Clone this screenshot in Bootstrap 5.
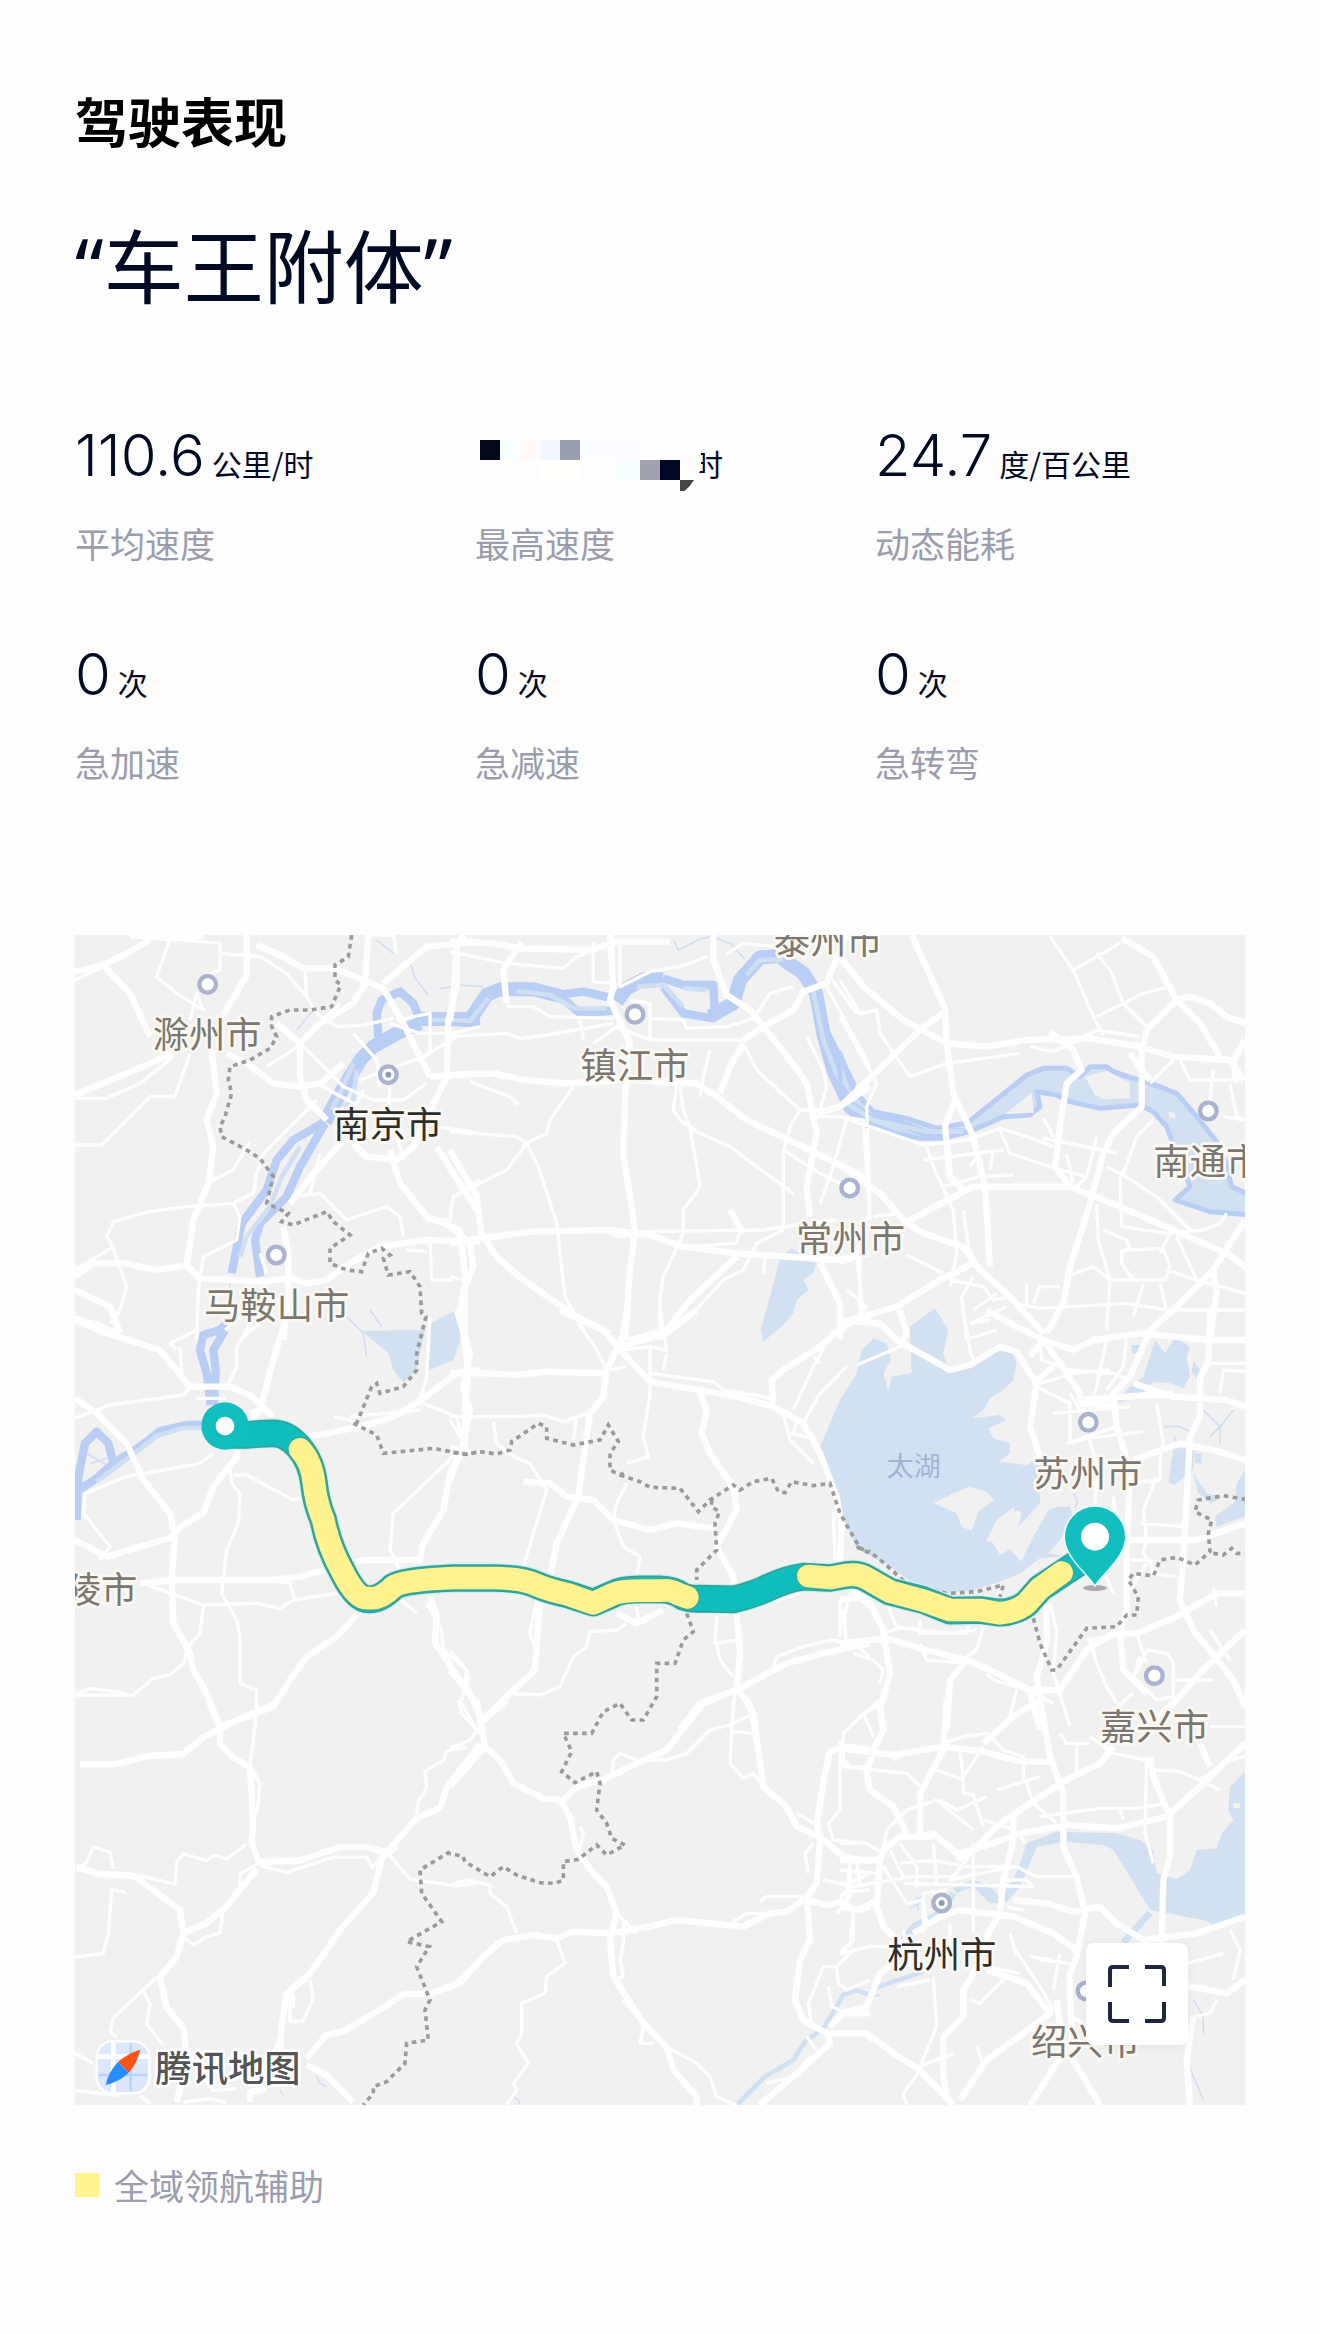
<!DOCTYPE html>
<html lang="zh-CN">
<head>
<meta charset="utf-8">
<meta name="viewport" content="width=device-width, initial-scale=1">
<title>驾驶表现</title>
<link href="https://cdn.jsdelivr.net/npm/bootstrap@5.3.0/dist/css/bootstrap.min.css" rel="stylesheet">
<script src="https://cdn.jsdelivr.net/npm/bootstrap@5.3.0/dist/js/bootstrap.bundle.min.js"></script>
<style>
body{background:#fdfdfe;color:#030a24;font-family:"Noto Sans CJK SC",sans-serif}
.page{padding:84px 75px 125px}
.page-title{font-size:53px;line-height:72px;color:#000}
.verdict{font-family:"Noto Sans","Noto Sans CJK SC",sans-serif;font-size:80px;line-height:100px;margin-top:60px}
.stats{--bs-gutter-x:30px;row-gap:71px;margin-top:103px}
.figure-line{height:72px;line-height:72px;column-gap:7px}
.num{font-family:Inter,"Noto Sans CJK SC",sans-serif;font-size:58px;font-weight:300}
.unit{font-size:30px}
.caption-line{font-size:35px;line-height:48px;color:#9b9dad;margin-top:28px}
.mosaic{width:226px;height:72px;margin-right:-15px;position:relative;z-index:1}
.route-map{margin-top:149px;aspect-ratio:1;background:#f1f1f1}
.route-map>svg{font-family:"Noto Sans CJK SC",sans-serif}
.expand{width:102px;height:102px;right:57px;bottom:60px;border-radius:8px;box-shadow:0 2px 12px #0000000d}
.legend-line{margin-top:56px;font-size:35px;line-height:48px;color:#9b9dad;gap:15px}
.swatch{width:24px;height:24px;background:#fef38f}
path,line,polyline{stroke-linejoin:round}
.water{fill:#d1e1f2}
.land{fill:#f1f1f1}
.bank{fill:none;stroke:#b9cef4;stroke-width:42}
.thin{stroke-width:25}
.stream{fill:none;stroke:#cfe0f3;stroke-width:14}
.creek{fill:none;stroke:#d1dff0;stroke-width:5}
.hw{fill:none;stroke:#fefefe;stroke-width:19}
.rd{fill:none;stroke:#fefefe;stroke-width:10}
.border-dots path{fill:none;stroke:#9b9b9b;stroke-width:11;stroke-dasharray:14 13;stroke-linejoin:miter}
.city{fill:#fff;stroke:#aab2d0;stroke-width:13}
.city-name{font-size:109px;fill:#7b7873;stroke:#faf8f0;stroke-width:16;paint-order:stroke;stroke-linejoin:round}
.major{fill:#2e2e2e}
.trip{fill:none;stroke-linecap:round}
</style>
</head>
<body>
<main class="page">
<h1 class="page-title fw-bold mb-0">驾驶表现</h1>
<p class="verdict mb-0">“车王附体”</p>
<section class="row stats">
<div class="col-4"><div class="figure-line d-flex align-items-baseline"><span class="num">110.6</span><span class="unit">公里/时</span></div><div class="caption-line">平均速度</div></div>
<div class="col-4"><div class="figure-line d-flex"><svg class="mosaic flex-shrink-0" viewBox="0 0 226 72" aria-hidden="true"><path fill="#fdfdfe" d="M0 0H226V48Q224 58 218 62H0z"/><path fill="#05081b" d="M5 21h20v20H5z"/><path fill="#f7ffff" d="M25 21h20v20H25z"/><path fill="#fffaf7" d="M45 21h20v20H45z"/><path fill="#f2f7ff" d="M65 21h20v20H65z"/><path fill="#989db0" d="M85 21h20v20H85z"/><path fill="#fbfcff" d="M105 21h60v20h-60z"/><path fill="#fffffb" d="M65 41h40v20H65z"/><path fill="#f5ffff" d="M145 41h20v20h-20z"/><path fill="#a0a2b0" d="M165 41h20v20h-20z"/><path fill="#010824" d="M185 41h20v20h-20z"/><path fill="#444448" d="M205 61h14q-6 10-14 14z"/></svg><span class="unit mt-2">时</span></div><div class="caption-line">最高速度</div></div>
<div class="col-4"><div class="figure-line d-flex align-items-baseline"><span class="num">24.7</span><span class="unit">度/百公里</span></div><div class="caption-line">动态能耗</div></div>
<div class="col-4"><div class="figure-line d-flex align-items-baseline"><span class="num">0</span><span class="unit">次</span></div><div class="caption-line">急加速</div></div>
<div class="col-4"><div class="figure-line d-flex align-items-baseline"><span class="num">0</span><span class="unit">次</span></div><div class="caption-line">急减速</div></div>
<div class="col-4"><div class="figure-line d-flex align-items-baseline"><span class="num">0</span><span class="unit">次</span></div><div class="caption-line">急转弯</div></div>
</section>
<section class="route-map position-relative overflow-hidden">
<svg class="d-block w-100 h-100" viewBox="45 45 3510 3510" role="img" aria-label="行程路线地图">
<!-- rivers and lakes -->
<g>
<path class="bank" d="M1260 297H1080M1080 310L1010 340 940 380 905 415 870 470 830 540 795 605"/>
<path class="bank thin" d="M1080 300L1060 250 1020 215 965 240 950 280 955 350M795 605L700 660 650 720 620 810 545 910 515 1060M795 610L720 740 680 830 600 910 585 960 600 1070"/>
<path class="stream" d="M880 430L840 520 815 570M720 680L665 770 630 860 560 950 540 1010M890 450L880 540 850 560M1110 300H1240"/>
<path class="creek" d="M1050 125l15 50 40 50M760 270l-50 60M950 60l50 40M1140 205l50-5M510 1090l-5 60"/>
</g>
<g transform="translate(0 1170)">
<path class="bank thin" d="M520 20L480 60 430 75 420 120 440 190 452 285M495 60L460 120 467 180 462 285M430 345H380L300 363 240 410 160 460 145 400 110 365 75 400 55 500 50 630M160 460L110 505 50 545"/>
<path class="stream" d="M430 354H370L290 378 230 425 110 515"/>
<path class="creek" d="M80 430l60 35M90 460l50-15M860 20l50 50 10 70M930 0l35 50"/>
<path class="water" d="M905 62L1095 60 1070 180 1030 217 1000 180 985 130zM1112 40L1190 0 1205 80 1180 150 1105 182z"/>
</g>
<g transform="translate(1170)">
<path class="bank" d="M0 298L60 300 110 225 150 208 250 208 330 228M500 245L530 205 580 178 640 178M780 290L850 250 870 180 930 112 985 108 1060 160 1098 220 1120 340 1150 450 1200 560 1265 612"/>
<path class="bank thin" d="M320 225L400 215 490 235M330 228L390 280 490 272M640 175L700 195 790 195 795 290M640 200L700 280 790 295M1125 330L1205 490 1190 560"/>
<path class="stream" d="M0 300L60 303 115 235M560 200L640 195 700 260M200 213L300 225 370 265 470 265M890 165L930 120 1000 118M1090 215L1120 360 1155 450 1215 580M700 205L770 210"/>
<path class="creek" d="M670 60l15 30 60-30 40-12 60 25 40 45M20 195l80 5"/>
<path class="water" d="M990 1015L1025 985 1098 1030 1090 1060 1060 1080 1075 1110 1040 1140 1030 1180 1000 1215 970 1240 940 1265 932 1230 960 1130z"/>
</g>
<g transform="translate(2340)">
<path class="water" stroke="#b9cef4" stroke-width="15" d="M0 400L40 510 100 575 200 595 290 625 380 610 480 530 560 465 610 445 680 445 720 470 750 440 800 440 820 455 880 475 920 485 1010 520 1070 590 1130 665 1155 720 1175 800 1230 825V885L1110 875 1005 840 1050 800 1010 700 980 620 940 575 900 555 780 565 690 545 650 525 590 515 600 560 570 585 490 590 400 630 310 655 240 655 170 640 70 605 0 520z"/>
<path class="bank" style="stroke-width:24" d="M0 500L40 560 90 592 180 610 260 642 370 636"/>
<path class="stream" d="M20 550L100 600 260 635 370 635"/>
<path class="land" d="M735 470L800 452 870 488 870 535 790 538 765 525zM495 582L575 518 582 578zM985 575l20 5 0 16-15-4z"/>
</g>
<g transform="translate(2340 1170)">
<path class="water" d="M-60 410L0 270 50 190 65 120 100 85 140 100 153 150 130 190 145 245 155 200 215 188 210 50 250 20 285-5 325 60 310 130 325 180 400 160 470 120 515 130 530 160 520 210 490 240 450 265 430 300 395 325 480 315 500 330 445 355 460 385 510 400 510 430 475 455 560 465 600 440 620 590 690 590 700 620 660 690 625 730 670 738 600 745 540 790 480 815 400 840 320 850 220 820 150 770 50 715-10 580z"/>
<path class="land" d="M282 580L340 550 390 530 440 545 462 570 415 605 395 662 365 650 350 610zM438 692L470 630 520 592 545 610 535 650 600 580 600 440 690 540 680 580 625 600 580 680 543 755 510 718 480 735 460 700z"/>
<path class="water" d="M560 465l35 10-20 90-50 40-10-50zM945 90l30 40 30-50 45 30-10 30 10 60-20 35-40-15-50-5-40 40-80 30 60-65 30-20zM875 105h28v25h-28zM1060 150l20 30-10 25-15-20zM1000 415h65l-5 65-55 45-20-5zM1065 430h20v30h-20zM1060 490l40 60 45 10-30 20-40-30zM1190 520l25-40v140l-85 30-5-30 60-45z"/>
<path class="creek" d="M970 350h50l40 20M1090 300l50 50 40-50M1110 380l30-30 0 50M1000 380l20 30M700 545l12 30-6 20"/>
</g>
<g transform="translate(2340 2340)">
<path class="water" d="M560 430L650 395 830 400 900 420 940 450 950 520 1010 537 1050 510 1070 450 1130 445 1145 400 1180 360 1165 330 1170 260 1225 205V650L1140 685 1090 660 930 630 870 530 820 450 790 435 680 425 590 440 570 490 540 560 500 605 450 610 400 560 350 580 340 565 400 538 450 560 480 590 520 540 540 490z"/>
<path class="stream" style="stroke-width:20" d="M340 580L300 640 220 680 190 720M850 728L930 638"/>
<path class="creek" d="M205 610l40-20M210 625l35-20M230 590l5 40M0 890l40-20 50 20 30-5M1040 1070l20 60 30 70M1060 900l30 50 0 50"/>
<path class="stream" d="M90 870L160 845 250 815"/>
<path class="land" d="M1180 310h20v14h-20z"/>
</g>
<g transform="translate(1170 2340)"><path class="stream" d="M1260 885L1220 870 1180 885 1120 985 1065 1025 1030 1080 945 1130 860 1215"/><path class="creek" d="M190 1190l20 15-10 15M-510 1170l10 15M-470 1160l20-5M-400 1130l10 20 20 10"/></g>
<!-- roads -->
<g>
<path class="hw" d="M45 155L130 135 200 100 270 60M130 135L210 220 270 350M45 525L200 460 340 400M210 45L330 55 430 45M560 45V165L490 285M590 75L660 105 730 145 820 145 910 180 970 205 1030 310 1110 470M500 400L560 430 640 490 720 500 780 490 850 430M455 390L470 520 440 600 460 680 445 790 400 900 380 1035 290 1050 190 1030 100 1030 45 1070M650 310L720 370 720 470 740 540 800 600M880 670L920 710 1010 720 1060 680 1160 470 1165 300 1190 200 1190 70 1215 45M925 45L915 190 880 250 780 310 720 370M380 1035L420 1075 600 1085 690 1075 740 1090 800 1080 870 1030 960 980 1100 960 1260 965M990 690L1020 790 1100 890 1200 930 1215 1070 1215 1260M1130 680L1180 760 1250 870M1110 470L1260 460M970 190L1100 80 1260 65M670 920L685 1000 685 1130 670 1260M45 1110L150 1160 180 1240M690 850L760 760 860 650"/>
<path class="rd" d="M330 55L290 170 350 220 430 270 410 220 390 300M320 55L480 70 480 100 600 110 680 160 740 230 770 280 830 320 910 315 1000 295M45 180L130 140M45 535H140L240 490 340 410M345 530L390 400M345 530H270L190 610 125 675H45M840 250L700 390 620 440M720 370L850 500 940 540 1030 540 1100 490M770 490L900 560M880 340L950 420 960 500M1010 300L1110 280 1110 400M990 310L1080 340 1180 340 1260 320M930 45L1000 45 1010 100M900 480L1090 410 1190 350M570 665L520 750 440 790M770 540L690 620 610 700 590 760 580 820 520 850 380 860 270 875 160 905 140 950 160 980 45 1050M150 960L200 1100 180 1170 150 1210M520 850L540 890 530 960 430 1010 415 1110 410 1260M700 830L780 820 860 900 980 860 1020 890 1030 950M780 700L750 820M850 640L910 510M1130 620L1260 640M1110 960L1115 1080 1180 1080M1040 990L1100 995M1030 720L1010 640M1100 900L1170 900 1180 830 1260 780M735 145L740 230M480 70L480 150 430 170M600 1000L620 1060M540 1260L620 1190M45 1190L110 1210 180 1240M990 500L985 560"/>
</g>
<g transform="translate(0 1170)">
<path class="hw" d="M45 30L140 70 300 120 390 230 510 230 570 255 640 320M685 0L640 150 600 300 540 370 530 440 460 530 430 610 360 650 340 680 140 740 45 690M45 265L110 310 200 400 250 510 330 610 345 680 335 810 340 940 390 1030 400 1080 440 1150 480 1250M570 310L600 300M740 380L800 370 900 350 1000 320 1070 280 1190 190 1260 180M1200 0L1225 180 1215 280 1215 410 1170 490 1150 600 1090 700 1080 750 910 750 720 800 640 810H340L240 820M890 915L830 980 740 1040 690 1110 640 1190 480 1250M1110 860L1130 920 1125 1000 1160 1050 1260 1200"/>
<path class="rd" d="M45 325L150 285 370 255 390 235M350 120L330 100 410 60M360 110L365 190M590 10L530 110 530 170 500 230M410 265H500M460 430L420 460 310 480 200 500 75 550 70 610 150 710 120 750M510 470L515 520 540 550 535 640 500 720 485 850 530 930 540 980 540 1120 590 1140 585 1260M520 495H560L700 570 740 560M250 820L430 885 590 880 660 895 700 870 830 850M430 885L420 970 385 1010 370 1060 330 1095 280 1105 220 1155H45L90 1135 200 1150M620 810L690 820 705 870M1110 20L1100 200 1080 270M820 320L870 330 910 350M1190 430L1000 610 990 720 1030 800 1000 850 1070 910M870 320L1080 300M1090 280L1190 320 1210 400M1230 320L1260 320M1100 880L1145 960 1150 1020 1220 1080 1225 1110 1200 1180M1260 430L1170 410M495 60L540 20"/>
</g>
<g transform="translate(1170)">
<path class="hw" d="M0 65L130 70 215 85 420 90 500 65 660 65M215 65L160 150 170 250M20 65L10 240 0 300M480 45L490 200 480 240 540 370 530 400 520 700 555 930 540 1050 525 1260M790 45V120L830 225 900 270 940 320 1020 420 1070 490 1100 640 1070 800 1080 890M530 480L350 490 220 480 130 460 0 465M530 480L740 490 800 530 890 600 1100 700 1260 780M880 370L840 440 810 520M880 360L940 320 1030 270 1060 215 1130 190 1145 150 1190 45M0 690L80 830 95 940 140 1010 220 1080 380 1190 480 1240M0 970L60 960 240 935 480 930 600 945 700 980 860 1000 1160 1020 1260 1000M1110 1030L1170 1150 1170 1260M1100 580L1170 560 1260 500M860 1010L720 1140 650 1230 540 1260M0 920L60 970 70 1040 40 1110 30 1190 45 1260M840 870L880 940"/>
<path class="rd" d="M0 95L170 130 340 145 380 110 440 90M430 65V185L490 190M510 75L510 200 600 155 690 140 770 110M830 100L880 70 980 80M170 260L250 260 300 290 490 295M600 295L700 300 710 325 830 320 930 290M0 350L170 340 210 355 290 345 490 310M390 300L400 360M430 370L500 320 600 360 600 250 540 240M600 360H880M880 370L920 450 1050 570 1110 570M1050 570L1020 620 1000 700 1000 930M920 280L960 220 1030 200M1070 350L1120 450 1130 500 1110 570M780 390L760 470 750 530M690 500L700 570 720 620 740 740 750 800 700 870 700 940 640 1070 630 1130V1260M680 490L670 570 690 600 750 640 840 680 920 740 1030 820M370 500L300 600 290 640 230 670 170 750 10 830 0 880M230 670L265 740 320 910 345 1130 400 1230M0 635L200 650 230 670M60 485L180 530 205 555M1000 690L1110 760 1170 790M1190 600L1140 770 1110 850M560 935L940 930 1040 915 1160 900M470 935L500 950 560 945M1000 930L920 970 880 1050 820 1080 720 1190M700 980L860 970 870 930M945 1010L940 1060M1240 930L1220 1010 1240 1180M1100 590L1160 590 1240 600 1260 900M0 1070L40 1080M1140 170L1220 280M1130 200L1260 440M1190 1110L1250 1160 1170 1240"/>
</g>
<g transform="translate(2340)">
<path class="hw" d="M215 45L315 265 320 370 340 520 400 650 435 800 450 1040M0 110L70 200 190 300 320 370 440 380 560 360 750 355 900 380 1000 410 1170 420 1210 480M845 55L940 110 1010 240 1080 310 1140 410M920 330L1010 240 1050 230 1110 250 1160 290 1230 315M315 275L240 330 0 560M630 335L700 390 725 450 680 490 660 620 645 740 690 800M920 330L905 400 905 560 820 640 790 700 750 850 690 1040 670 1150 620 1240M345 540L315 620 330 770 370 810M0 735L120 820 200 910M190 910L400 800 690 800 840 860 1160 1000 1230 1050M200 910L250 940 370 980 420 1050 510 1130 610 1240M400 1030L300 1080 170 1160 0 1210M1215 900L1120 1050 1000 1170 920 1240M1120 1050L1130 1120 1110 1250M1215 360L1180 420 1190 490M870 400L905 450 930 480"/>
<path class="rd" d="M630 50L700 150 760 290 790 345M700 150L840 70M770 100L810 150 850 250 920 320M770 290L910 220 990 200M0 180L60 280 110 270 120 340 210 470 320 430 540 400M570 380L640 395 700 370 770 330 900 350M0 290L110 490 80 560 90 880 70 920M0 590L150 640 250 675 380 660 480 625 560 650 640 680M260 680L280 740 340 870 350 1000 330 1100M250 720L490 690M310 800L420 770 520 765M460 690L450 750M480 630L510 700 660 750 740 770 770 650M640 660L830 700M610 655L790 690M850 760L890 650 940 600M800 740L840 760 950 830 1050 930M840 770L845 920M1000 420L930 490M1020 420L1050 480 1190 480M1120 450L1110 540M1170 490L1190 590 1215 600M1150 590L1215 600M770 850L775 960 810 1080 800 1230M790 930L860 960 870 990 970 985 990 1040 975 1080 880 1080 845 1030V995L870 985M845 920L980 940 1090 930 1140 910 1160 880M990 940L960 1000M1010 950L1070 1080 1215 1120M980 1050L1070 1080M680 1070L760 1040 810 1080 880 1080M520 1150L600 1165 860 1150 980 1170 1215 1170M960 1090L980 1170M910 1090L880 1190M370 870L385 980 420 1060M200 1005L310 1060M400 1070L365 1130 380 1260M330 1080L430 1100 460 1140 510 1130M400 1170L470 1120M390 1210L500 1160M560 1090V1160M580 1150L600 1100H660M610 595L640 650M680 700L700 790M740 770L700 810M390 740L420 700M60 950L60 1170M0 1030L60 1010M100 890L180 880"/>
</g>
<g transform="translate(1170 1170)">
<path class="hw" d="M330 0L460 60 510 120 600 215 860 260 970 290 1060 340 1110 430 1160 560 1175 650 1170 760M530 0L515 90 470 180 460 260 420 310 400 450 385 560 320 700 300 800M0 190H110L200 195 290 185 460 190M220 515L300 520 350 560 430 570 490 630 600 660 680 640 790 655M750 250L770 300 755 370 780 430 850 530 860 600 800 710 850 800 870 1030 860 1130 900 1190 915 1260M510 110L650 70 740 0M970 280L965 210 1000 180 1110 110 1190 40 1260 20M270 860L255 1080 180 1150 100 1230M860 1140L1010 1060 1120 1030 1260 1000M860 1140L750 1180 690 1260M500 910L560 940 640 900M0 1080L60 1150 100 1240M20 0L60 130 40 230 60 300 40 400 0 510M1210 840L1260 890"/>
<path class="rd" d="M0 320H200L280 315 340 335 440 300M130 335L140 400 190 440 240 460 290 540 220 770M385 40L440 120 470 180M520 120L600 110 650 120 630 0M600 110V250L580 380 595 440 530 460M650 130L640 180M480 180L530 170M600 190L790 215 820 240 970 265M1150 60L1090 170 1030 300M1190 170L1110 250 1060 340M1090 140L1110 160M1000 310L1020 390 1090 460M1020 370L1090 385M1040 330L1030 370M530 520L500 580 490 630 520 710 570 740 560 800M370 390L380 320M260 870L240 970 260 1030M530 940L500 960 420 965 410 1010 370 1040 330 1130 270 1155 180 1150M800 920L795 1000 860 990M800 1000L810 1050 850 1100M870 900L1050 850M970 1070L980 1040 1060 1010 1140 990 1210 1000 1260 1040M1200 850L1180 930 1190 1000M1150 600L1155 750M0 1020L50 1080 40 1150 30 1190M855 1150L845 1260M560 890L565 930M0 330L30 380"/>
</g>
<g transform="translate(2340 1170)">
<path class="hw" d="M0 30L120 40 170 90 330 180 390 165 480 110 530 125 570 190 590 220 570 350 600 440M180 0L200 70 180 110M440 0L530 50 610 90 660 160 720 250 720 290M0 870L80 860 130 960 150 1090 120 1200 130 1260M0 1000L140 985 240 1015 380 1050 450 1080 570 1140 660 1140 740 1020 820 970 890 970 1010 920 1130 850 1215 850M570 140L610 90 700 120 760 90 900 70 1110 90H1215M930 60L870 200 820 250 830 350 870 480 860 740 860 900 840 970 850 1080 920 1150M1110 0L1105 160 1080 200V320L1050 380 1040 560 1030 750 1020 870 1060 960 1180 1110 1215 1190M640 170L580 220M880 220L1000 260 1160 270 1215 290M720 270L1000 250M830 290L720 280M870 690H1070L1215 640M880 450L1020 400 1120 420 1215 450M620 880L620 1000 590 1100 600 1160M1215 960L1090 1080 1000 1180 930 1240M380 1050L330 1110 320 1260M570 1150L600 1260"/>
<path class="rd" d="M370 0L390 120 400 150M390 40L450 30M390 85L470 60M50 165L180 110M600 90L605 150 690 180 820 190 870 210M800 90L765 250M860 80L850 170 800 240M600 220L700 190 810 180M590 230L690 280 690 400 740 385 910 365M640 310L870 290M745 380L770 460 765 580M680 400L830 350M690 250L720 300M1090 160H1215M1215 185L1150 180 1140 250M900 640L1030 650M930 520L960 510 960 450 970 400 950 280M950 500L910 600 920 690 910 730 930 760M870 520L940 510M870 750H930L940 790 1010 800M820 560L830 640M790 780L820 850M870 840L920 760M630 880L650 960 640 1090 690 1250M600 860L640 900M750 990L770 1060 800 1130 830 1180M740 990L850 970M890 970L920 1060M890 1090L920 1020 980 1030 1000 1060V1160L950 1170 880 1100 900 1040M1000 1110H1120M1110 960L1170 1050M1120 830L1130 890M140 880L170 950 240 960 330 970 410 960M430 950L410 1020 380 1040M240 930L240 970 380 970 390 920M240 1000L260 1050 390 1060M10 900L20 1000M130 970L190 950M440 1090L460 1110 560 1140 640 1180M530 1140L510 1220M40 1030L100 1050 130 1080 120 1120M120 1170L40 1240M880 1150L820 1200M0 870V980"/>
</g>
<g transform="translate(0 2340) scale(1 1.014)">
<path class="hw" d="M445 0L480 85 480 130 520 170 570 200 580 370 575 420 600 490M640 15L550 50 430 110 370 160 270 165 165 190 60 190M50 495L120 515 220 520 360 620 370 690 350 760 300 820 320 910 370 970 380 1060 350 1190M590 500L500 610 440 660 370 690M600 480L720 475 840 435 920 435 980 450 1070 350 1140 320 1160 260 1260 130M970 450L940 570 840 680 750 810 680 870 665 960 660 1050M1260 770L1190 840 1110 870 1030 870 970 910 850 980 800 990 740 1060M740 1080L800 1110 880 1190M570 1190V1160L620 1150"/>
<path class="rd" d="M590 0L580 120 570 190 600 250 590 340M50 500L80 480 100 435 150 450 160 500M240 520L345 545 350 480 370 455 440 475 460 460 500 470 560 425M200 570L155 560 145 690 130 750 45 760M540 560V515L600 480M370 700L400 725 440 700 480 690 490 620M290 820L160 940 150 980 170 1000M250 860L270 900 260 960 310 1020M600 490L680 510 820 465 920 465 940 500M980 450L1050 530 1190 550 1260 540M940 490L1010 440 1000 420M1070 350L1075 300 1100 260 1095 210 1150 180 1160 150 1220 140M690 870L690 950H730L760 880 750 830M700 870L700 910M640 1050L670 960M45 1155L180 1170M240 1170L270 1195M370 1190L450 1180 500 1190M45 1045L100 1075M1200 0L1250 90M390 1050L460 1155 530 1150"/>
</g>
<g transform="translate(1170 2340)">
<path class="hw" d="M80 0L105 140 0 260M170 0L100 60M105 140L150 180 190 250 280 295 330 300 360 350 380 450 430 520 470 560 500 640 480 720 490 830 580 970 650 1040 670 1110 740 1190V1215M340 300L380 260 460 240 560 190 650 150 760 10 790 0M0 860L30 850 100 770 160 720 250 705 320 715 370 695 480 700 600 680 680 660 880 680 960 640 1010 635 1060 600M890 0L910 40 930 190 940 260 1010 320 1040 380 1110 410 1180 470 1260 485M1260 150L1190 140 1140 155 1125 220 1100 370 1110 420 1100 550 1070 590 1080 720 1050 780 1035 900 1060 960 1130 1000H1250L1270 1020M1070 600L1130 615 1180 605 1210 630 1260 620M1130 1000L1140 1030 1040 1120 930 1215M1140 980L1180 940 1260 940"/>
<path class="rd" d="M25 0L35 40 90 100M0 145L60 120 90 80M485 230L490 180 510 160 560 180 650 180 710 160 780 90 840 75 900 45M850 0L840 190 880 235 910 220 940 260M850 95L910 100M0 555L50 540 120 555 120 580 170 620 200 700M320 720L345 790 290 830 285 880 215 910 215 1000 200 1030 235 1090 190 1150 200 1170 170 1215M390 380L400 400 385 460M500 640L520 660 520 730 510 780 520 830 490 840M520 660L560 700M520 900L570 960M580 980L570 1030 610 1030M650 1040L740 1090 780 1130 800 1190 860 1215M130 730L220 710 270 700M850 665L890 640H950M930 605L950 590 1060 590M1240 40L1180 100V180L1200 200 1250 200M1170 160L1170 330 1135 370 1150 420 1240 430M1040 340L1110 380M1090 430L1065 460 1075 520M1200 480V590L1160 640M1120 540L1190 555 1260 520M1190 575L1260 570M1210 630L1200 740M1260 740L1210 750 1160 800 1120 800 1075 910 1085 980M1160 800L1165 850 1190 870 1260 840M1135 860L1145 920 1170 930M1070 1010L1100 1050M950 1150L1030 1130 1080 1070"/>
</g>
<g transform="translate(2340 2340)">
<path class="hw" d="M115 0L130 90 100 150 80 220 90 270 160 320 200 400M320 0L310 150 240 280 240 410 280 400 350 460 400 450M0 145L160 165 310 140 430 155 540 185 630 185M430 130L520 50 600 0 630 170 670 280 670 440 710 530 735 640 710 770 690 820 690 890 700 1080 780 1215M400 450L480 370 600 290 680 240 780 190 820 140M930 170L940 230 990 350 990 470 970 540 965 730M1215 130L1080 260 980 350 830 385 680 375 540 400 400 450 350 480M520 350L520 420 490 540 480 640 450 690 400 820 370 870 370 950 310 1010 310 1120 320 1200M0 480L120 480 130 450 180 410 280 410M120 480L110 620 130 680 170 720M220 700L300 650 360 630 520 650 640 700 720 760M520 600L620 610 700 635 780 620 830 670 910 720 1070 700 1215 650M0 620L60 630 110 600M170 780L120 820 80 920 0 940M0 1000H80L160 1060 240 1110 340 1215M440 810L560 850 630 940 550 1000 440 1080 360 1200M650 900L670 1060 570 1215M1000 850L1160 880 1215 840M1060 950L1040 1080 1050 1215M1080 130L1110 200"/>
<path class="rd" d="M70 40L100 110M0 120L10 200 200 220 240 260M160 180L190 160M70 40L110 20M310 130L370 110 440 100 490 150 550 170 550 240M290 210L370 240 370 280 400 285 430 380M360 150L370 240M370 230L430 140M130 450L140 390 200 330 290 300 400 390M300 300L350 330 440 290M430 360L530 390M470 270L600 230M560 250L580 310 650 370M600 350L780 325 890 325 980 310M840 330L850 360M660 100L680 130 750 130M710 130V220M750 110L820 160 920 180M920 170L915 400 940 490M940 210L1020 215 1080 240 1140 270M1080 240L1170 180 1215 170M1110 80H1215M0 430L80 430 130 460M0 510L120 520M0 590L40 560 220 530M30 470L20 600M50 480L60 560M130 500L200 610 250 600 260 670M150 450L190 530 340 530 400 450M180 430L230 500 230 560M280 430L290 550M180 490L290 480M190 550L580 560M280 480L380 500 530 500M330 540L420 520 530 500 590 530 700 530M400 430V700M480 540H560L580 560M320 570L250 580V700M330 670V740M0 760L90 740 160 740M280 830L290 980 240 1100 340 1060M170 860L270 840M390 900L420 910 490 840M600 780L690 790M570 770L640 780M640 870L660 760M520 740L600 860 640 930M0 590L40 640 40 720 0 760M1170 690L1200 750 1180 840M1040 790L1150 760M1060 950L1110 940 1130 900M240 1110L190 1180 200 1215M410 1040L430 1090M690 950L800 1000M500 620L550 630M510 700L530 770M540 410L560 430M190 690L210 800M540 820L440 800"/>
</g>
<!-- province borders -->
<g class="border-dots">
<path d="M875 45L865 110 825 135 825 180 842 195 815 260 750 270 690 270 635 290 635 320 650 350 630 385 570 420 510 440 505 480 515 520 495 590 480 620 485 650 560 690 600 715 640 770 620 850 685 880 665 905 700 915 800 875 820 905 870 945 810 985V1030L860 1050 905 1055 925 1000 965 985 990 1005 970 1015 985 1065 1050 1055 1080 1100 1085 1180 1098 1190 1070 1300 1070 1350 1030 1400 960 1420 950 1390 935 1400 890 1510M880 1510L950 1545 970 1600 1120 1585 1215 1603 1260 1595"/>
<g transform="translate(1170 1170)"><path d="M10 428L50 432 90 425 140 432 180 420 185 395 265 340 290 350 290 385 330 395 370 405 450 390 475 345 505 395 480 430 480 480 510 495 530 485M510 495L570 515 600 532 690 535 745 605 780 570 850 525 870 540 910 515 965 505 985 545 1005 548 1025 515 1090 527 1140 520 1170 610 1230 715 1260 725M785 570L785 590 808 605 795 640 800 720 740 780 740 810M710 910L730 965 700 990 675 1060H620V1160L580 1230H545L510 1180 460 1205 425 1270H340L365 1325 335 1385 375 1418 440 1385 450 1420 440 1500 470 1540 485 1585 525 1605 470 1635 440 1605 385 1648 340 1655V1710L315 1720 270 1718 200 1695 160 1670 120 1700 45 1655 38 1638 0 1632"/></g>
<path d="M1170 2802L1165 2798 1080 2850 1085 2920 1145 3005 1040 3065 1108 3080 1070 3140 1110 3240 1095 3270 1105 3360 1040 3370 1035 3430 980 3485 940 3500 940 3520 910 3555"/>
<g transform="translate(2340 1170)"><path d="M50 710L110 740 200 820 320 850 410 845 490 825 480 860M580 925L600 1000 635 1080 650 1080 740 955 830 950 860 915 890 915 895 860 865 810 880 790 940 798 960 750 1010 742 1065 765 1110 725 1105 670 1115 630 1065 605 1075 570 1150 557 1215 568M1120 730L1150 735 1175 715 1190 730H1215"/></g>
</g>
<!-- cities -->
<g class="city"><circle cx="443" cy="193" r="25"/><circle cx="649" cy="1005" r="25"/><circle cx="985" cy="464" r="25"/><circle cx="1725" cy="283" r="25"/><circle cx="2369" cy="804" r="25"/><circle cx="3445" cy="573" r="25"/><circle cx="3085" cy="1507" r="25"/><circle cx="3283" cy="2267" r="25"/><circle cx="2645" cy="2949" r="25"/><circle cx="3078" cy="3213" r="25"/></g>
<g fill="#8f99c0"><circle cx="985" cy="464" r="9"/><circle cx="2645" cy="2949" r="9"/></g>
<g class="city-name">
<text x="278" y="385">滁州市</text><text class="major" x="820" y="655">南京市</text><text x="432" y="1196">马鞍山市</text><text x="1561" y="476">镇江市</text><text x="2141" y="103">泰州市</text><text x="2208" y="996">常州市</text><text x="3280" y="765">南通市</text><text x="2920" y="1700">苏州市</text><text x="-95" y="2050">铜陵市</text><text x="3120" y="2460">嘉兴市</text><text class="major" x="2482" y="3143">杭州市</text><text x="2913" y="3406">绍兴市</text>
</g>
<text x="2480" y="1668" font-size="81" fill="#a2b4d4">太湖</text>
<!-- driven route -->
<defs><path id="trip" d="M495 1545H560Q610 1540 640 1540 Q680 1540 715 1580 Q755 1625 762 1690 Q768 1750 790 1800 Q805 1880 850 1960 Q890 2040 925 2038 Q960 2040 1000 2000 Q1030 1980 1180 1974H1300Q1390 1975 1430 1995 Q1470 2012 1520 2022 L1600 2048 1660 2022Q1685 2008 1740 2008H1800Q1840 2008 1870 2030 Q1890 2038 1920 2036 L2020 2038Q2060 2030 2110 2010 Q2180 1975 2230 1970 L2310 1974 2360 1965Q2395 1960 2420 1975 L2490 2015 2590 2040 2670 2072 2760 2070 2820 2078Q2870 2075 2900 2050 L2940 2005 3060 1925"/>
<path id="assist" d="M720 1588Q755 1625 762 1690 Q768 1750 790 1800 Q805 1880 850 1960 Q890 2040 925 2034 Q960 2040 1000 2000 Q1030 1980 1180 1974H1300Q1390 1975 1430 1995 Q1470 2012 1520 2022 L1600 2050 1660 2022Q1685 2012 1740 2012H1800Q1830 2008 1850 2020 L1882 2032M2245 1968L2310 1974 2360 1965Q2395 1960 2420 1975 L2490 2015 2590 2042 2670 2070 2760 2070 2820 2080Q2870 2075 2900 2050 L2940 2005 3005 1958"/></defs>
<use href="#trip" class="trip" stroke="#c4f3f2" stroke-width="90"/><use href="#trip" class="trip" stroke="#3d9c93" stroke-width="83"/><use href="#trip" class="trip" stroke="#0fbdbd" stroke-width="74"/><use href="#assist" class="trip" stroke="#4b9f8c" stroke-width="76" stroke-opacity=".6"/><use href="#assist" class="trip" stroke="#fef38f" stroke-width="68"/>
<circle cx="495" cy="1518" r="71" fill="#12bdbd"/><circle cx="495" cy="1518" r="28" fill="#fff"/>
<ellipse cx="3105" cy="2004" rx="36" ry="9" fill="#aaa9ad"/>
<path d="M3105 1995C3085 1960 3015 1910 3015 1850A90 90 0 0 1 3195 1850C3195 1910 3125 1960 3105 1995z" fill="#12bdbd" stroke="#eaffff" stroke-width="10" paint-order="stroke"/><circle cx="3105" cy="1850" r="42" fill="#fff"/>
<!-- map provider -->
<rect x="110" y="3364" width="158" height="156" rx="48" fill="#dce8fa" stroke="#fff" stroke-width="7"/>
<path d="M160 3368V3516M114 3410H264" stroke="#fff" stroke-width="14"/><path d="M212 3370V3514M116 3465H262" stroke="#b5d2fa" stroke-width="7"/>
<path d="M241 3389Q205 3398 174 3426L206 3458Q231 3430 241 3389z" fill="#fb5215"/><path d="M137 3495Q146 3455 174 3426L206 3458Q180 3484 137 3495z" fill="#268cff"/>
<text x="286" y="3487" class="city-name" style="fill:#555;stroke:#fff" font-weight="500">腾讯地图</text>
</svg>
<button type="button" class="expand btn bg-white border-0 p-0 position-absolute d-flex align-items-center justify-content-center" aria-label="全屏查看地图"><svg width="58" height="58" viewBox="0 0 58 58" fill="none" stroke="#1f2640" stroke-width="4"><path d="M2 22V5Q2 2 5 2H21M37 2H53Q56 2 56 5V21M56 37V53Q56 56 53 56H37M21 56H5Q2 56 2 53V37"/></svg></button>
</section>
<div class="legend-line d-flex align-items-center"><span class="swatch"></span><span>全域领航辅助</span></div>
</main>
</body>
</html>
